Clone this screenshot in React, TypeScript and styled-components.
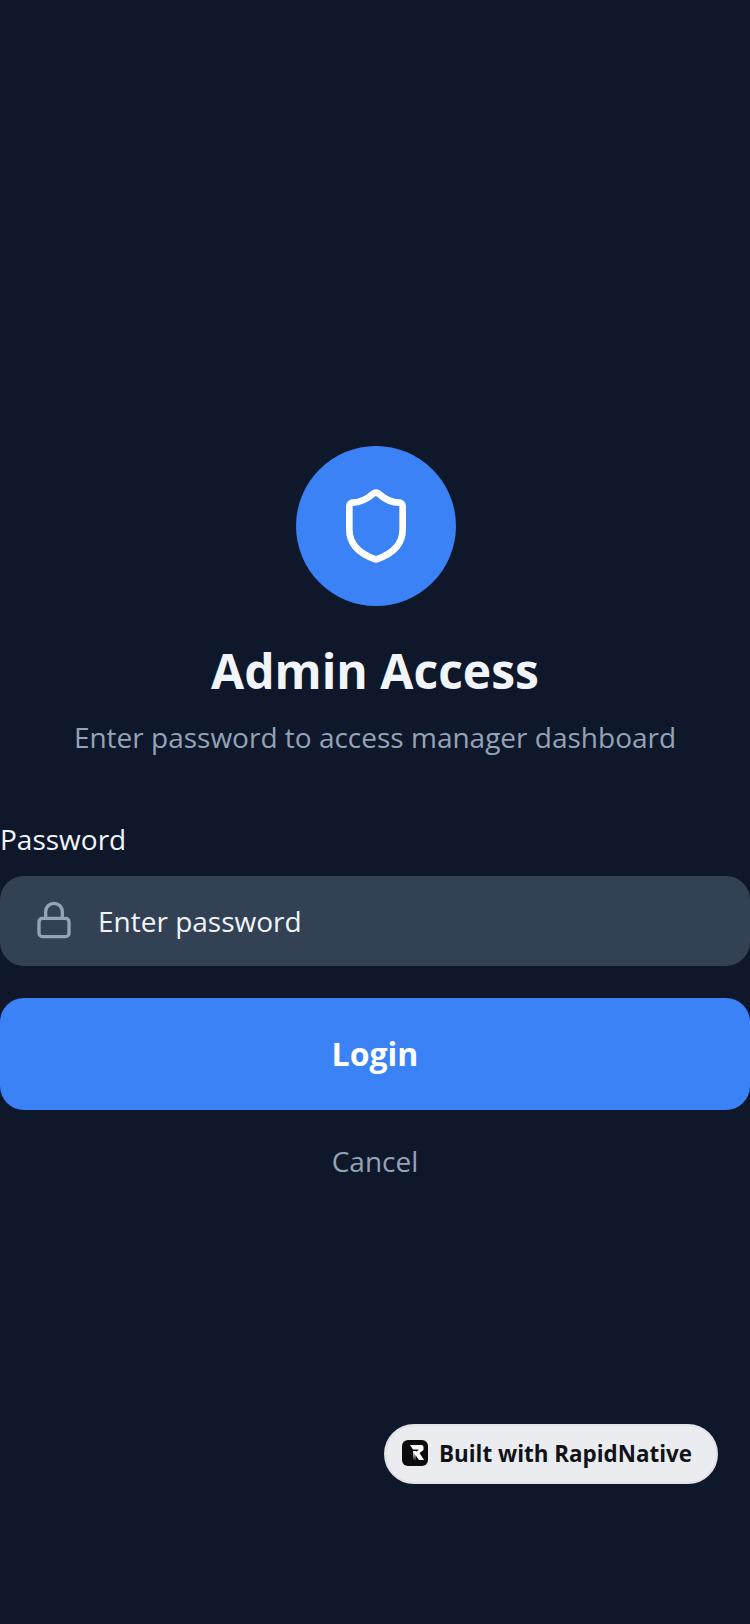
import { createGlobalStyle, styled } from "styled-components";
import { Lock, Shield } from "lucide-react";

const GlobalStyle = createGlobalStyle`
  html, body {
    margin: 0;
    padding: 0;
    background: #0f172a;
  }
`;

const Page = styled.main`
  position: relative;
  width: 750px;
  height: 1624px;
  box-sizing: border-box;
  padding-top: 3px;
  display: flex;
  flex-direction: column;
  justify-content: center;
  background: #0f172a;
  font-family: "Open Sans", "Noto Sans", sans-serif;
`;

const Header = styled.header`
  display: flex;
  flex-direction: column;
  align-items: center;
  margin-bottom: 62px;
`;

const IconCircle = styled.div`
  width: 160px;
  height: 160px;
  margin-left: 2px;
  border-radius: 50%;
  background: #3b82f6;
  color: #fff;
  display: flex;
  align-items: center;
  justify-content: center;
  margin-bottom: 33px;
`;

const Title = styled.h1`
  margin: 0 0 14px;
  font-size: 48px;
  line-height: 64px;
  font-weight: 700;
  color: #f1f5f9;
`;

const Subtitle = styled.p`
  margin: 0;
  font-size: 28px;
  line-height: 40px;
  color: #94a3b8;
`;

const Label = styled.label`
  display: block;
  font-size: 28px;
  line-height: 40px;
  color: #f1f5f9;
  margin-bottom: 17px;
`;

const InputRow = styled.div`
  height: 90px;
  border-radius: 24px;
  background: #334155;
  display: flex;
  align-items: center;
  padding: 0 34px;
  gap: 24px;
  margin-bottom: 32px;
  color: #94a3b8;
`;

const LockIcon = styled(Lock)`
  margin-top: -2px;
`;

const Placeholder = styled.span`
  font-size: 28px;
  color: #f1f5f9;
`;

const LoginButton = styled.button`
  width: 100%;
  height: 112px;
  padding: 0 0 2px;
  border: none;
  border-radius: 24px;
  background: #3b82f6;
  color: #fff;
  font-family: inherit;
  font-size: 32px;
  font-weight: 700;
  margin-bottom: 31px;
`;

const CancelLink = styled.div`
  text-align: center;
  font-size: 28px;
  line-height: 40px;
  color: #94a3b8;
`;

const Badge = styled.div`
  position: absolute;
  left: 384px;
  top: 1424px;
  width: 334px;
  height: 60px;
  box-sizing: border-box;
  border-radius: 30px;
  border: 2px solid #e0e2e6;
  background: #ebecef;
  display: flex;
  align-items: center;
  gap: 11px;
  padding: 0 0 2px 16px;
  font-size: 22.4px;
  font-weight: 700;
  color: #111318;
`;

const BadgeLogo = styled.svg`
  width: 26px;
  height: 26px;
  flex: none;
`;

function App() {
  return (
    <Page>
      <GlobalStyle />
      <Header>
        <IconCircle>
          <Shield size={80} strokeWidth={2} />
        </IconCircle>
        <Title>Admin Access</Title>
        <Subtitle>Enter password to access manager dashboard</Subtitle>
      </Header>
      <Label>Password</Label>
      <InputRow>
        <LockIcon size={40} strokeWidth={2} />
        <Placeholder>Enter password</Placeholder>
      </InputRow>
      <LoginButton>Login</LoginButton>
      <CancelLink>Cancel</CancelLink>
      <Badge>
        <BadgeLogo viewBox="0 0 26 26">
          <defs>
            <linearGradient id="stem" x1="0" y1="0" x2="0" y2="1">
              <stop offset="0" stopColor="#fff" />
              <stop offset="1" stopColor="#fff" stopOpacity="0.1" />
            </linearGradient>
          </defs>
          <rect width="26" height="26" rx="6" fill="#0b0b0d" />
          <path d="M8 5h11.5a2 2 0 0 1 2 2v3l-4 3 4.5 7h-5l-5-7 4.5-3V9.500H11z" fill="#fff" />
          <rect x="11" y="11" width="3" height="9" fill="url(#stem)" />
        </BadgeLogo>
        Built with RapidNative
      </Badge>
    </Page>
  );
}

export default App;
